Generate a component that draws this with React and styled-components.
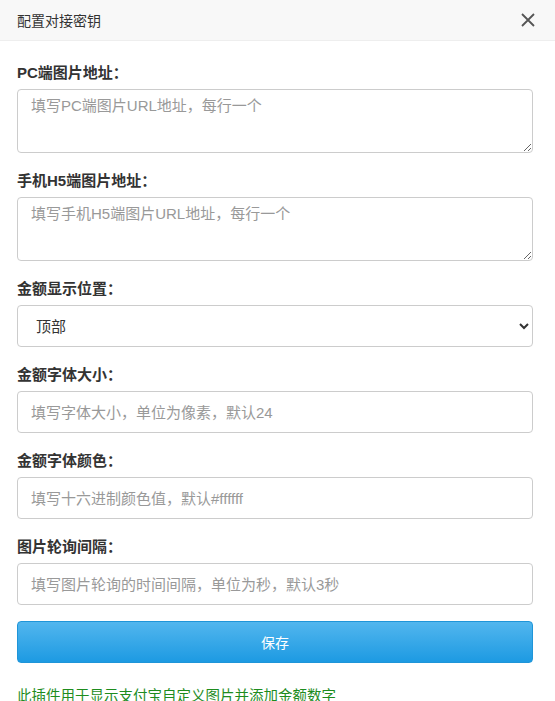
import React from 'react';
import styled, { createGlobalStyle } from 'styled-components';

const GlobalStyle = createGlobalStyle`
  html, body {
    margin: 0;
    padding: 0;
    background: #fff;
  }
  body {
    font-family: "Liberation Sans", "Noto Sans CJK SC", sans-serif;
    font-size: 14px;
    color: #333;
  }
  * { box-sizing: border-box; }
`;

const Dialog = styled.div`
  width: 555px;
  height: 701px;
  overflow: hidden;
  background: #fff;
`;

const Header = styled.div`
  height: 41px;
  background: #f8f8f8;
  border-bottom: 1px solid #eee;
  display: flex;
  align-items: center;
  justify-content: space-between;
  padding: 0 20px 0 17px;
`;

const Title = styled.div`
  font-size: 14px;
  color: #333;
`;

const CloseButton = styled.button`
  border: none;
  background: none;
  padding: 0;
  width: 14px;
  height: 14px;
  display: flex;
  cursor: pointer;
`;

const Body = styled.form`
  padding: 22px 22px 0 17px;
`;

const Group = styled.div`
  margin-bottom: 18px;
`;

const Label = styled.label`
  display: block;
  font-weight: bold;
  font-size: 15px;
  line-height: 20px;
  margin-bottom: 6px;
  color: #333;
`;

const fieldBase = `
  display: block;
  width: 100%;
  border: 1px solid #ccc;
  border-radius: 4px;
  font-family: "Liberation Sans", "Noto Sans CJK SC", sans-serif;
  font-size: 15px;
  color: #333;
  background: #fff;
  outline: none;
  &::placeholder { color: #999; }
`;

const TextArea = styled.textarea`
  ${fieldBase}
  height: 64px;
  padding: 6px 13px;
  resize: vertical;
  line-height: 20px;
`;

const Input = styled.input`
  ${fieldBase}
  height: 42px;
  padding: 0 13px;
`;

const SelectBox = styled.select`
  ${fieldBase}
  height: 42px;
  padding: 0 14px;
`;

const SaveButton = styled.button`
  display: block;
  width: 100%;
  height: 42px;
  margin-top: -2px;
  border: 1px solid #1f95d8;
  border-radius: 4px;
  background: linear-gradient(to bottom, #52b6ee, #1d9ae2);
  color: #fff;
  font-family: "Liberation Sans", "Noto Sans CJK SC", sans-serif;
  font-size: 14px;
  cursor: pointer;
`;

const Note = styled.p`
  margin: 23px 0 0;
  line-height: 20px;
  color: #1e8c1e;
  font-size: 14.5px;
`;

const fields = [
  { label: 'PC端图片地址：', type: 'textarea', placeholder: '填写PC端图片URL地址，每行一个' },
  { label: '手机H5端图片地址：', type: 'textarea', placeholder: '填写手机H5端图片URL地址，每行一个' },
  { label: '金额显示位置：', type: 'select', options: ['顶部', '中间', '底部'] },
  { label: '金额字体大小：', type: 'input', placeholder: '填写字体大小，单位为像素，默认24' },
  { label: '金额字体颜色：', type: 'input', placeholder: '填写十六进制颜色值，默认#ffffff' },
  { label: '图片轮询间隔：', type: 'input', placeholder: '填写图片轮询的时间间隔，单位为秒，默认3秒' },
];

function Field({ field }) {
  if (field.type === 'textarea') return <TextArea placeholder={field.placeholder} />;
  if (field.type === 'select')
    return (
      <SelectBox defaultValue={field.options[0]}>
        {field.options.map((o) => (
          <option key={o}>{o}</option>
        ))}
      </SelectBox>
    );
  return <Input placeholder={field.placeholder} />;
}

export default function App() {
  return (
    <Dialog>
      <GlobalStyle />
      <Header>
        <Title>配置对接密钥</Title>
        <CloseButton type="button" aria-label="关闭">
          <svg width="14" height="14" viewBox="0 0 14 14">
            <path d="M1 1 L13 13 M13 1 L1 13" stroke="#555" strokeWidth="1.8" fill="none" />
          </svg>
        </CloseButton>
      </Header>
      <Body onSubmit={(e) => e.preventDefault()}>
        {fields.map((f) => (
          <Group key={f.label}>
            <Label>{f.label}</Label>
            <Field field={f} />
          </Group>
        ))}
        <SaveButton type="submit">保存</SaveButton>
        <Note>此插件用于显示支付宝自定义图片并添加金额数字</Note>
      </Body>
    </Dialog>
  );
}
